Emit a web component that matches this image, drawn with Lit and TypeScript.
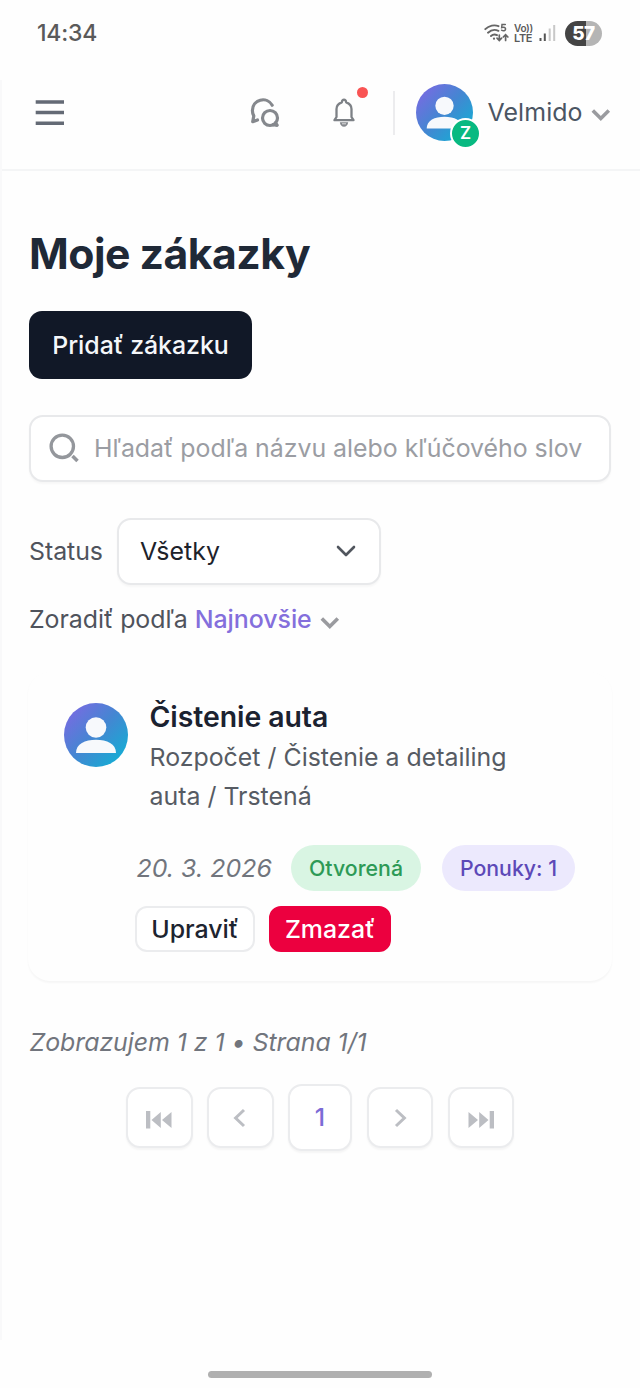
import { LitElement, html, css, svg } from "lit";
import { customElement, property } from "lit/decorators.js";

const person = svg`
  <circle cx="32" cy="24.5" r="10.3" fill="#f7f9fc"/>
  <path d="M12 50C12 41 21 36.8 32 36.8S52 41 52 50Z" fill="#f7f9fc"/>`;

@customElement("user-avatar")
class UserAvatar extends LitElement {
  @property() size = "64";
  static styles = css`
    :host { display: block; flex: none; }
    svg { display: block; }
  `;
  render() {
    return html`<svg width=${this.size} height=${this.size} viewBox="0 0 64 64">
      <defs><linearGradient id="g" x1="0.05" y1="0.1" x2="0.9" y2="0.9">
        <stop offset="0" stop-color="#7a6ae2"/><stop offset="0.5" stop-color="#4486d2"/><stop offset="1" stop-color="#14add4"/>
      </linearGradient></defs>
      <circle cx="32" cy="32" r="32" fill="url(#g)"/>${person}
    </svg>`;
  }
}

@customElement("app-status-bar")
class AppStatusBar extends LitElement {
  static styles = css`
    :host { display: flex; height: 54px; padding: 12px 38px 0 37px; align-items: center; box-sizing: border-box; color: #5a5a5a; }
    .time { font-size: 23px; font-weight: 500; letter-spacing: -0.2px; flex: 1; line-height: 42px; }
    svg { display: block; }
    .wifi { margin-right: 4px; }
    .lte { display: flex; flex-direction: column; font-weight: 600; width: 25px; color: #5a5a5a; white-space: nowrap; }
    .lte span { display: block; font-size: 11px; line-height: 10px; letter-spacing: -0.3px; }
    .lte .volte { font-size: 10px; line-height: 10px; letter-spacing: -0.3px; }
    .battery { width: 37px; height: 25px; border-radius: 12.5px; margin-left: 9px; text-align: center; color: #fff;
      font-size: 19px; font-weight: 800; line-height: 25px; letter-spacing: -0.5px; background: linear-gradient(90deg, #444 57%, #b5b5b5 57%); }
  `;
  render() {
    return html`
      <span class="time">14:34</span>
      <svg class="wifi" width="26" height="20" viewBox="0 0 26 20" fill="none" stroke="#666" stroke-width="1.9" stroke-linecap="round">
        <path d="M1.300 6.200C5 2.500 10.500 1.500 14.500 3.200M4 9.700c3-2.800 7-3.400 10.400-1.900M7 13c1.700-1.500 4-1.800 6-.8"/>
        <circle cx="10" cy="15.700" r="1.100" fill="#666" stroke="none"/>
        <path d="M15.300 12v5M13 15.200l2.300 2.300 2.300-2.300M21.600 17.500V12M19.300 14l2.300-2.300 2.300 2.300" stroke-width="1.700"/>
        <path d="M21.300 1.400h-3.300l-.3 3.200c2.400-.8 3.900 0 3.900 1.500 0 1.700-2.300 2.300-4 1.100" stroke-width="1.500"/>
      </svg>
      <span class="lte"><span class="volte">Vo))</span><span>LTE</span></span>
      <svg width="17" height="18" viewBox="0 0 17 18"><path d="M.5 14h2v3h-2zM4.800 9.500h2V17h-2z" fill="#555"/><path d="M9.700 4.500h2V17h-2zM14.200 1h2v16h-2z" fill="#c8c8c8"/></svg>
      <span class="battery">57</span>`;
  }
}

@customElement("app-header")
class AppHeader extends LitElement {
  static styles = css`
    :host { display: flex; height: 117px; box-sizing: border-box; border-bottom: 2px solid #f4f5f6; align-items: center; padding: 2px 28px 0 35px; }
    svg { display: block; flex: none; }
    .chat { margin-left: 184px; }
    .bell { position: relative; margin-left: 52px; }
    .dot { position: absolute; left: 24px; top: -11px; width: 11px; height: 11px; border-radius: 50%; background: #f95454; }
    .rule { width: 2px; height: 44px; background: #ececee; margin-left: 37.500px; flex: none; }
    .account { display: flex; align-items: center; margin-left: 21.500px; }
    .pic { position: relative; }
    .badge { position: absolute; left: 34px; top: 34px; width: 27px; height: 27px; border: 2.500px solid #fff; border-radius: 50%; background: #08b981;
      color: #fff; font-size: 17px; font-weight: 600; line-height: 27px; text-align: center; }
    .name { font-size: 24.900px; color: #4b5563; margin-left: 14.500px; letter-spacing: 0.100px; flex: none; width: 103.500px; white-space: nowrap; padding-bottom: 2px; }
    .chev { margin-top: 5px; }
  `;
  render() {
    return html`
      <svg width="30" height="28" viewBox="0 0 30 28"><path d="M.7 3h28.300M.7 13.500h28.300M.7 24.300h28.300" stroke="#646a75" stroke-width="3.400"/></svg>
      <svg class="chat" width="32" height="32" viewBox="0 0 32 32" fill="none" stroke="#85888d" stroke-width="3.200" stroke-linecap="round" stroke-linejoin="round">
        <path d="M23.200 8.200A10.600 10.600 0 0 0 3.400 13.600c0 2 .5 3.700 1.400 5.300L3.700 24.700l4.800-1.700"/>
        <circle cx="21" cy="21" r="7.500"/><path d="M26.400 25.800l1.800 2.500-4-.7"/>
      </svg>
      <span class="bell">
        <svg width="22" height="30" viewBox="0 0 22 30" fill="none" stroke="#7d8186" stroke-width="2.300" stroke-linejoin="round">
          <path d="M1.500 22.200h19L18.500 19V11C18.500 7.600 16.300 5.300 13.200 4.300 13 2.800 12.200 1.700 11 1.700S9 2.800 8.800 4.300C5.700 5.300 3.500 7.600 3.500 11V19Z"/>
          <path d="M6.800 24.200h8.400c-.4 2.900-2 4.500-4.200 4.500s-3.800-1.600-4.200-4.500Z" fill="#85888d" stroke="none"/><path d="M9 25.800h4" stroke="#ddd" stroke-width="1"/>
        </svg><i class="dot"></i>
      </span>
      <span class="rule"></span>
      <span class="account">
        <span class="pic"><user-avatar size="57"></user-avatar><span class="badge">Z</span></span>
        <span class="name">Velmido</span>
        <svg class="chev" width="20" height="14" viewBox="0 0 20 14"><path d="M1.800 2.500l8 8 8-8" fill="none" stroke="#9a9b9f" stroke-width="3.600"/></svg>
      </span>`;
  }
}

@customElement("order-card")
class OrderCard extends LitElement {
  static styles = css`
    :host { display: block; box-sizing: border-box; height: 309px; border-radius: 22px; padding: 23px 36px 0; background: #fefefe;
      box-shadow: 0 1.500px 2px rgba(0,0,0,.035); }
    .top { display: flex; gap: 22px; }
    user-avatar { margin-top: 8px; }
    .title { margin: 0 0 0 -0.500px; font-size: 28.400px; line-height: 43px; font-weight: 600; color: #1b2230; letter-spacing: -0.050px; }
    .sub { margin: 0 0 0 -0.500px; font-size: 24.900px; line-height: 39px; color: #565b63; white-space: nowrap; }
    .meta { display: flex; align-items: center; margin: 29px 0 0 72px; height: 46px; white-space: nowrap; }
    .date { font-size: 24.900px; font-style: italic; color: #71757d; letter-spacing: 0.050px; flex: none; width: 155px; box-sizing: border-box; padding-left: 0.500px; }
    .pill { height: 46px; line-height: 46px; border-radius: 23px; font-size: 21.300px; font-weight: 500; text-align: center; box-sizing: border-box; flex: none; letter-spacing: 0; }
    .green { width: 130px; background: #d9f5e3; color: #2d9a56; }
    .violet { width: 133px; background: #ece9fd; color: #5d49b8; margin-left: 21px; }
    .actions { display: flex; gap: 14px; margin: 15px 0 0 71px; }
    .btn { height: 46px; border-radius: 12px; font: 500 24.900px/42px Inter, sans-serif; box-sizing: border-box; text-align: center; border: 2px solid #ebecee; padding: 0 0 2px; letter-spacing: 0; }
    .edit { width: 120px; background: #fff; color: #1d2430; }
    .del { width: 122px; background: #ec003f; color: #fff; border-color: #ec003f; }
  `;
  render() {
    return html`
      <div class="top"><user-avatar></user-avatar>
        <div><h2 class="title">Čistenie auta</h2>
          <p class="sub">Rozpočet / Čistenie a detailing<br>auta / Trstená</p></div></div>
      <div class="meta"><span class="date">20. 3. 2026</span><span class="pill green">Otvorená</span><span class="pill violet">Ponuky: 1</span></div>
      <div class="actions"><button class="btn edit">Upraviť</button><button class="btn del">Zmazať</button></div>`;
  }
}

@customElement("page-nav")
class PageNav extends LitElement {
  static styles = css`
    :host { display: flex; justify-content: center; align-items: center; gap: 14.500px; height: 67px; }
    .cell { display: flex; align-items: center; justify-content: center; box-sizing: border-box; width: 66.500px; height: 61px; padding: 0;
      border: 2px solid #ebecee; border-radius: 14px; background: #fff; box-shadow: 0 1.500px 2px rgba(0,0,0,.04); }
    .current { width: 64px; height: 67px; font: 500 24.900px Inter, sans-serif; color: #7c6bd6; padding-bottom: 1px; }
    svg { display: block; }
    .low { margin-top: 4px; }
  `;
  render() {
    return html`
      <button class="cell"><svg class="low" width="28" height="18" viewBox="0 0 28 18" fill="#bcbec3"><path d="M1 0h4.300v17.500H1zM15.800 1v16L6.500 9zM26.500 1v16L17 9z"/></svg></button>
      <button class="cell"><svg width="14" height="20" viewBox="0 0 14 20"><path d="M11 2L2.600 10l8.400 8" fill="none" stroke="#bcbec3" stroke-width="3"/></svg></button>
      <button class="cell current">1</button>
      <button class="cell"><svg width="14" height="20" viewBox="0 0 14 20"><path d="M3 2l8.400 8L3 18" fill="none" stroke="#bcbec3" stroke-width="3"/></svg></button>
      <button class="cell"><svg class="low" width="28" height="18" viewBox="0 0 28 18" fill="#bcbec3"><path d="M22.700 0H27v17.500h-4.300zM12.200 1v16l9.300-8zM1.500 1v16L11 9z"/></svg></button>`;
  }
}

@customElement("app-root")
class AppRoot extends LitElement {
  static styles = css`
    :host { display: flex; flex-direction: column; height: 1388px; width: 640px; background: #fefefe; font-family: Inter, sans-serif; overflow: hidden; position: relative; }
    .edge { position: absolute; left: 0; top: 80px; width: 2px; height: 1260px; background: #f9f9fa; }
    main { display: flex; flex-direction: column; padding: 0 29px; flex: 1; }
    h1 { margin: 56px 0 0; font-size: 42.700px; line-height: 53px; font-weight: 700; color: #1f2937; letter-spacing: -0.500px; white-space: nowrap; }
    .add { margin: 31px 0 0; width: 223px; height: 68px; border: 0; border-radius: 13px; background: #111827; color: #f5f7fa; font: 500 24.900px Inter, sans-serif; letter-spacing: -0.050px; padding: 0 0 1px; white-space: nowrap; }
    .box { display: flex; align-items: center; box-sizing: border-box; height: 67px; border: 2px solid #e8e9eb; border-radius: 14px; background: #fff; box-shadow: 0 1.500px 2px rgba(0,0,0,.03); }
    .search { margin-top: 36px; padding: 0 20px 1px 18px; }
    svg { display: block; flex: none; }
    .hint { font-size: 24.900px; color: #9b9da3; margin-left: 15px; white-space: nowrap; flex: none; letter-spacing: -0.020px; }
    .row { display: flex; align-items: center; font-size: 24.900px; color: #4f535c; white-space: nowrap; letter-spacing: -0.050px; }
    .status { margin-top: 36px; }
    .label { width: 88px; padding-bottom: 1px; box-sizing: border-box; }
    .select { width: 264px; justify-content: space-between; padding: 0 23px 1px 21px; color: #1d222b; letter-spacing: 0.100px; }
    .sort { height: 40px; margin-top: 14px; }
    .sort b { font-weight: 500; color: #846fdc; margin: 0 8px 0 7px; }
    .sort svg { margin-top: 7px; }
    order-card { margin: 33px -1px 0 -1px; }
    .info { margin: 43px 0 0 0.500px; height: 36px; line-height: 36px; font-size: 24.900px; font-style: italic; color: #71757d; letter-spacing: -0.040px; white-space: nowrap; }
    page-nav { margin-top: 24px; }
    .home { width: 224px; height: 7px; border-radius: 4px; background: #b0b0b0; align-self: center; margin-bottom: 10px; }
  `;
  render() {
    return html`
      <app-status-bar></app-status-bar>
      <app-header></app-header>
      <i class="edge"></i>
      <main>
        <h1>Moje zákazky</h1>
        <button class="add">Pridať zákazku</button>
        <div class="box search">
          <svg width="30" height="30" viewBox="0 0 30 30" fill="none" stroke="#94979c" stroke-width="3.300"><circle cx="13.300" cy="13.300" r="11.200"/><path d="M23.500 23l5 5" stroke-width="3.600"/></svg>
          <span class="hint">Hľadať podľa názvu alebo kľúčového slov</span>
        </div>
        <div class="row status"><span class="label">Status</span>
          <div class="box select"><span>Všetky</span>
            <svg width="20" height="14" viewBox="0 0 20 14"><path d="M2 3l8 8 8-8" fill="none" stroke="#51565e" stroke-width="2.600" stroke-linecap="round" stroke-linejoin="round"/></svg></div></div>
        <div class="row sort"><span>Zoradiť podľa</span><b>Najnovšie</b>
          <svg width="20" height="14" viewBox="0 0 20 14"><path d="M1.800 2.500l8 8 8-8" fill="none" stroke="#9a9b9f" stroke-width="3.600"/></svg></div>
        <order-card></order-card>
        <p class="info">Zobrazujem 1 z 1 • Strana 1/1</p>
        <page-nav></page-nav>
      </main>
      <div class="home"></div>`;
  }
}
